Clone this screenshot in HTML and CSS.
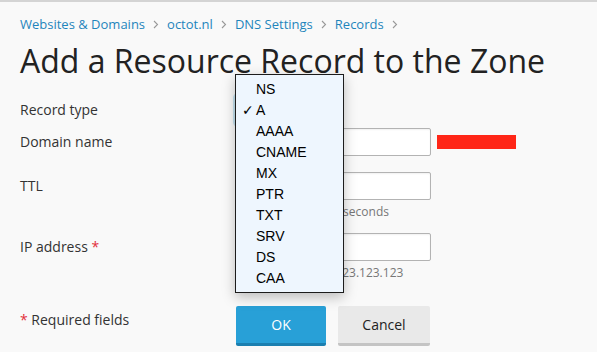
FILE: index.html
```html
<!DOCTYPE html>
<html lang="en">
  <head>
    <meta charset="UTF-8" />
    <meta name="viewport" content="width=device-width, initial-scale=1.0" />
    <title>Add a Resource Record to the Zone</title>
    <link rel="stylesheet" href="styles.css">
  </head>
  <body>
    <div class="page">
      <nav class="breadcrumbs">
        <a href="#">Websites &amp; Domains</a>
        <span class="sep"><svg width="6" height="9" viewBox="0 0 6 9"><path d="M1 1l3.5 3.5L1 8" fill="none" stroke="#999" stroke-width="1.1"/></svg></span>
        <a href="#">octot.nl</a>
        <span class="sep"><svg width="6" height="9" viewBox="0 0 6 9"><path d="M1 1l3.5 3.5L1 8" fill="none" stroke="#999" stroke-width="1.1"/></svg></span>
        <a href="#">DNS Settings</a>
        <span class="sep"><svg width="6" height="9" viewBox="0 0 6 9"><path d="M1 1l3.5 3.5L1 8" fill="none" stroke="#999" stroke-width="1.1"/></svg></span>
        <a href="#">Records</a>
        <span class="sep"><svg width="6" height="9" viewBox="0 0 6 9"><path d="M1 1l3.5 3.5L1 8" fill="none" stroke="#999" stroke-width="1.1"/></svg></span>
      </nav>

      <h1 class="title">Add a Resource Record to the Zone</h1>

      <form class="form">
        <div class="row row-type">
          <label class="label">Record type</label>
          <div class="field">
            <div class="select">A</div>
          </div>
        </div>

        <div class="row row-domain">
          <label class="label">Domain name</label>
          <div class="field field-inline">
            <input type="text" class="input" />
            <span class="redacted"></span>
          </div>
        </div>

        <div class="row row-ttl">
          <label class="label">TTL</label>
          <div class="field">
            <input type="text" class="input" />
            <div class="hint">Default TTL: 86400 seconds</div>
          </div>
        </div>

        <div class="row row-ip">
          <label class="label">IP address <span class="req">*</span></label>
          <div class="field">
            <input type="text" class="input" />
            <div class="hint">For example, 123.123.123.123</div>
          </div>
        </div>

        <div class="row row-buttons">
          <div class="label"><span class="req">*</span> Required fields</div>
          <div class="field field-inline">
            <button type="button" class="btn btn-primary">OK</button>
            <button type="button" class="btn btn-default">Cancel</button>
          </div>
        </div>

        <!-- open native select list -->
        <ul class="dropdown">
          <li>NS</li>
          <li class="checked">A</li>
          <li>AAAA</li>
          <li>CNAME</li>
          <li>MX</li>
          <li>PTR</li>
          <li>TXT</li>
          <li>SRV</li>
          <li>DS</li>
          <li>CAA</li>
        </ul>
      </form>
    </div>
  </body>
</html>
```

FILE: styles.css
```css
html,
body {
  margin: 0;
  height: 100%;
}

body {
  background: #f9f9f9;
  font-family: "Open Sans", "DejaVu Sans", sans-serif;
  color: #333;
  border-top: 2px solid #d4d4d4;
  box-sizing: border-box;
  overflow: hidden;
}

.page {
  padding: 0 20px;
}

/* Breadcrumbs */
.breadcrumbs {
  display: flex;
  align-items: center;
  height: 18px;
  margin-top: 13px;
  font-size: 13px;
}

.breadcrumbs a {
  color: #1f85bc;
  text-decoration: none;
}

.breadcrumbs .sep {
  display: inline-flex;
  margin: 0 8px;
}

/* Title */
.title {
  margin: 8px 0 0;
  font-size: 32px;
  font-weight: 400;
  line-height: 40px;
  color: #222;
}

/* Form */
.form {
  position: relative;
  margin-top: 15px;
}

.row {
  display: flex;
  align-items: flex-start;
}

.label {
  width: 216px;
  flex: none;
  font-size: 14px;
  line-height: 28px;
  color: #333;
}

.req {
  color: #e2303a;
}

.field-inline {
  display: flex;
  align-items: center;
}

.row-type {
  margin-bottom: 4px;
}

.row-domain {
  margin-bottom: 16px;
}

.row-ttl {
  margin-bottom: 13px;
}

.row-ip {
  margin-bottom: 25px;
}

/* closed select, mostly hidden under its open list */
.select {
  width: 90px;
  height: 28px;
  box-sizing: border-box;
  border: 1px solid #8cc6e6;
  border-radius: 2px;
  background: #fff;
  box-shadow: 0 0 0 3px rgba(40, 160, 214, 0.25);
  font-size: 14px;
  line-height: 26px;
  padding-left: 8px;
}

.input {
  display: block;
  width: 195px;
  height: 28px;
  box-sizing: border-box;
  margin: 0;
  border: 1px solid #b3b3b3;
  border-radius: 2px;
  background: #fff;
  box-shadow: inset 0 1px 2px rgba(0, 0, 0, 0.06);
}

.redacted {
  display: inline-block;
  width: 79px;
  height: 14px;
  margin-left: 6px;
  background: #ff2617;
}

.hint {
  margin-top: 4px;
  font-size: 12px;
  line-height: 16px;
  color: #777;
}

.btn {
  height: 40px;
  box-sizing: border-box;
  margin: 0;
  border: 0;
  border-radius: 2px;
  font-family: "Open Sans", "DejaVu Sans", sans-serif;
  font-size: 14px;
  cursor: pointer;
}

.btn-primary {
  width: 90px;
  background: #28a0d7;
  border-bottom: 3px solid #1b7fb0;
  color: #fff;
}

.btn-default {
  width: 92px;
  margin-left: 12px;
  background: #e9e9e9;
  border-bottom: 3px solid #c4c4c4;
  color: #222;
}

/* Native list, opened over the form */
.dropdown {
  position: absolute;
  left: 215px;
  top: -22px;
  width: 107px;
  margin: 0;
  padding: 4px 0 3px;
  list-style: none;
  background: #eef6fe;
  border: 1px solid #1c1c1c;
  box-shadow: 0 4px 12px rgba(0, 0, 0, 0.25);
  font-family: "Liberation Sans", Arial, sans-serif;
  font-size: 14px;
  color: #000;
}

.dropdown li {
  position: relative;
  height: 21px;
  line-height: 21px;
  padding-left: 20px;
}

.dropdown li.checked::before {
  content: "\2713";
  position: absolute;
  left: 6px;
  font-family: "DejaVu Sans", sans-serif;
  font-size: 14px;
  font-weight: 700;
}
```
